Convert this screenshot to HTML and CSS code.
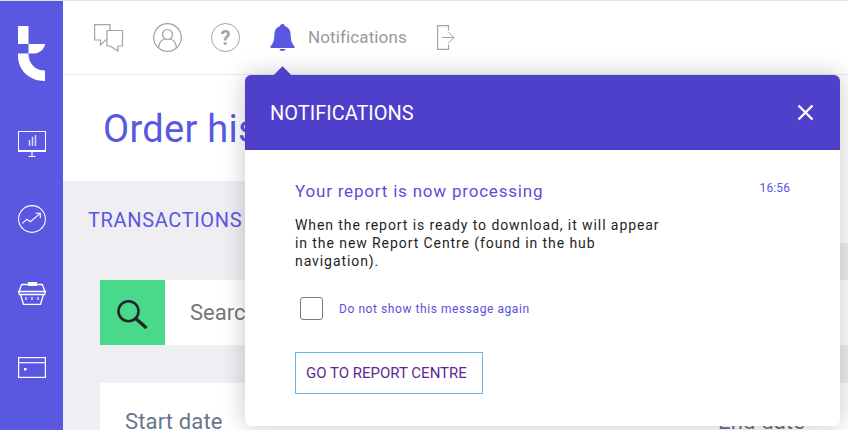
FILE: index.html
```html
<!DOCTYPE html>
<html lang="en">
<head>
<meta charset="utf-8">
<title>Order history</title>
<link rel="stylesheet" href="styles.css">
</head>
<body>
<div class="app">
  <aside class="sidebar">
    <svg class="logo" width="27" height="55" viewBox="0 0 27 55"><path fill="#fff" d="M0 0h10.500v18H0zM10.500 18H27c-.5 5-5 9-10.500 9.500h-6zM0 27.500h10.500c0 9.500 6 17 16.500 17V55C11 55 0 44 0 30z"/></svg>
    <nav class="side-nav">
      <svg width="28" height="26" viewBox="0 0 28 26" fill="none" stroke="#fff"><rect x=".5" y=".5" width="27" height="20" stroke-width="1"/><path d="M.5 19.500h27" stroke-width="1"/><path d="M14 20.500v5M10.500 25.500h7" stroke-width="1.200"/><path d="M11.500 9v6M14.500 5.700V15M17.500 4v11" stroke-width="1.500" opacity=".75"/></svg>
      <svg width="28" height="28" viewBox="0 0 28 28" fill="none" stroke="#fff" stroke-width="1.100"><circle cx="14" cy="14" r="13.400"/><path d="M4.300 18.300L9 14.300l3.300 2.400 10-8.400M17.700 8.300h4.600v5"/></svg>
      <svg width="28" height="23" viewBox="0 0 28 23" fill="none" stroke="#fff" stroke-width="1.300"><path d="M1 9.500L3.700 2.500H24.300L27 9.500"/><rect x="10" y="0" width="9" height="4" fill="#fff" stroke="none"/><path d="M.6 9.500h26.800l-.8 3H1.400zM2.500 12.500L5.500 22.300h17L25.500 12.500"/><path d="M8 15v3M14 15v3M20 15v3" stroke-width="1.400" opacity=".85"/></svg>
      <svg width="28" height="21" viewBox="0 0 28 21" fill="none" stroke="#fff" stroke-width="1.200"><rect x=".6" y=".6" width="26.800" height="19.800"/><path d="M1 5.700h26"/><rect x="6" y="11" width="2.500" height="2.500" fill="#fff" stroke="none"/></svg>
    </nav>
  </aside>
  <div class="main">
    <header class="topbar">
      <svg class="top-icon" width="30" height="28" viewBox="0 0 30 28" fill="none" stroke="#a3a3a3" stroke-width="1.200"><path d="M16 6V.6H.6V16H6.500v5l5-5H13"/><path d="M13 6.500H28.500V22H24v5l-8-5H13z"/></svg>
      <svg class="top-icon" width="29" height="29" viewBox="0 0 29 29" fill="none" stroke="#a3a3a3" stroke-width="1.200"><circle cx="14.500" cy="14.500" r="13.800"/><circle cx="14.500" cy="11.500" r="5"/><path d="M5.500 25c0-6 4-8.500 6.500-9M23.500 25c0-6-4-8.500-6.500-9"/></svg>
      <div class="help">?</div>
      <svg class="bell" width="25" height="27" viewBox="0 0 25 27"><path fill="#5a58e0" d="M12.500 0c1.500 0 2.500 1 2.500 2.300 4 1.200 5.700 4.700 5.700 9 0 5 1 8 3.800 11.200v1.500H.5v-1.500C3.300 19.300 4.300 16.300 4.300 11.300c0-4.300 1.700-7.800 5.700-9C10 1 11 0 12.500 0zM9.500 25h6c0 1.300-1.300 2-3 2s-3-.7-3-2z"/></svg>
      <span class="top-label">Notifications</span>
      <svg class="logout" width="18" height="25" viewBox="0 0 18 25" fill="none" stroke="#a3a3a3"><path d="M11.500 5.500V.6H.6v23.800h10.900v-5" stroke-width="1.200"/><path d="M5 12.500h12M11.500 7l5.500 5.500L11.500 18" stroke-width="1"/></svg>
    </header>
    <section class="title-band"><h1 class="page-title">Order history</h1></section>
    <section class="content">
      <div class="section-bar">
        <h2 class="section-title">TRANSACTIONS</h2>
        <div class="section-fill"></div>
      </div>
      <div class="search">
        <div class="search-btn"><svg width="32" height="32" viewBox="0 0 32 32" fill="none" stroke="#20262b"><circle cx="11.500" cy="14.200" r="10" stroke-width="2.600"/><path d="M19 21.700l10.500 9.300" stroke-width="3.400"/></svg></div>
        <div class="search-field">Search</div>
      </div>
      <div class="dates"><span>Start date</span><span>End date</span></div>
    </section>
  </div>
</div>
<div class="panel">
  <div class="panel-head"><span class="panel-title">NOTIFICATIONS</span>
    <svg width="17" height="17" viewBox="0 0 17 17" stroke="#fff" stroke-width="2.400"><path d="M1.500 1.500l14 14M15.500 1.500l-14 14"/></svg>
  </div>
  <div class="panel-body">
    <div class="msg-head"><span class="msg-title">Your report is now processing</span><span class="msg-time">16:56</span></div>
    <p class="msg-text">When the report is ready to download, it will appear in the new Report Centre (found in the hub navigation).</p>
    <label class="check-row"><span class="checkbox"></span><span class="check-label">Do not show this message again</span></label>
    <button class="cta">GO TO REPORT CENTRE</button>
  </div>
</div>
</body>
</html>
```
FILE: styles.css
```css
* { box-sizing: border-box; }
html, body { margin: 0; height: 100%; overflow: hidden; }
body { font-family: Roboto, sans-serif; background: #eeeef3; position: relative; width: 848px; height: 430px; }
.app { display: flex; height: 430px; border-top: 1px solid #dfe7e6; }
.sidebar { width: 63px; flex: none; background: #5a58e0; display: flex; flex-direction: column; align-items: center; padding-top: 25px; }
.side-nav { display: grid; grid-auto-rows: 74.5px; align-items: center; justify-items: center; margin-top: 26px; }
.main { flex: 1; min-width: 0; display: flex; flex-direction: column; }
.topbar { height: 74px; flex: none; background: #fff; border-bottom: 1px solid #ececef; display: flex; align-items: center; padding-left: 31px; }
.top-icon { margin-right: 29px; }
.help { width: 29px; height: 29px; border: 1.200px solid #a3a3a3; border-radius: 50%; color: #a3a3a3; font-size: 20px; font-weight: 700; display: flex; align-items: center; justify-content: center; margin-right: 30px; }
.bell { margin-right: 13px; }
.top-label { font-size: 17px; color: #999; letter-spacing: .12px; margin-bottom: 2px; }
.logout { margin-left: 30px; }
.title-band { height: 106px; flex: none; background: #fff; padding: 28px 0 0 40px; }
.page-title { margin: 0; font-size: 38px; font-weight: 400; color: #5a58e0; letter-spacing: .3px; line-height: 52px; white-space: nowrap; }
.content { flex: 1; }
.section-bar { display: flex; height: 62px; }
.section-title { margin: 0; width: 200px; flex: none; padding: 26px 0 0 25px; font-size: 20px; font-weight: 400; color: #5a58e0; letter-spacing: .65px; line-height: 26px; }
.section-fill { flex: 1; background: #fff; }
.search { display: flex; margin: 37px 0 0 37px; height: 65px; }
.search-btn { width: 65px; background: #48da8a; display: flex; align-items: center; justify-content: center; }
.search-field { flex: 1; background: #fff; color: #777; font-size: 22px; padding-left: 25px; line-height: 65px; }
.dates { margin: 38px 0 0 37px; height: 60px; background: #fff; display: flex; justify-content: space-between; padding: 26px 43px 0 25px; font-size: 22px; letter-spacing: .15px; color: #66758a; }
.panel { position: absolute; left: 245px; top: 75px; width: 595px; height: 351px; background: #fff; border-radius: 6px; box-shadow: 0 0 24px rgba(0,0,0,.22); }
.panel::before { content: ""; position: absolute; left: 30.500px; top: -6.500px; width: 13px; height: 13px; background: #4f40cb; transform: rotate(45deg); }
.panel-head { position: relative; height: 75px; background: #4f40cb; border-radius: 6px 6px 0 0; display: flex; align-items: center; justify-content: space-between; padding: 0 26px 0 25px; }
.panel-title { font-size: 20px; color: #fff; }
.panel-body { padding: 31px 50px 0; }
.msg-head { display: flex; justify-content: space-between; align-items: flex-start; }
.msg-title { font-size: 17px; line-height: 20px; color: #5a50d8; letter-spacing: .8px; }
.msg-time { font-size: 12px; line-height: 14px; color: #5a58e0; letter-spacing: .1px; }
.msg-text { margin: 15px 0 0; width: 372px; font-size: 14px; line-height: 18px; color: #1f1f1f; letter-spacing: .92px; }
.check-row { display: flex; align-items: center; margin: 27px 0 0 5px; }
.checkbox { width: 23px; height: 23px; border: 1.500px solid #7a7a7a; border-radius: 3px; }
.check-label { margin-left: 16px; font-size: 12px; color: #5a50d8; letter-spacing: .57px; }
.cta { display: block; margin-top: 32px; width: 188px; height: 42px; background: #fff; border: 1px solid #64b5f0; font: 400 15px Roboto, sans-serif; color: #5b2a91; padding: 0 0 0 10px; text-align: left; letter-spacing: 0; }
```
